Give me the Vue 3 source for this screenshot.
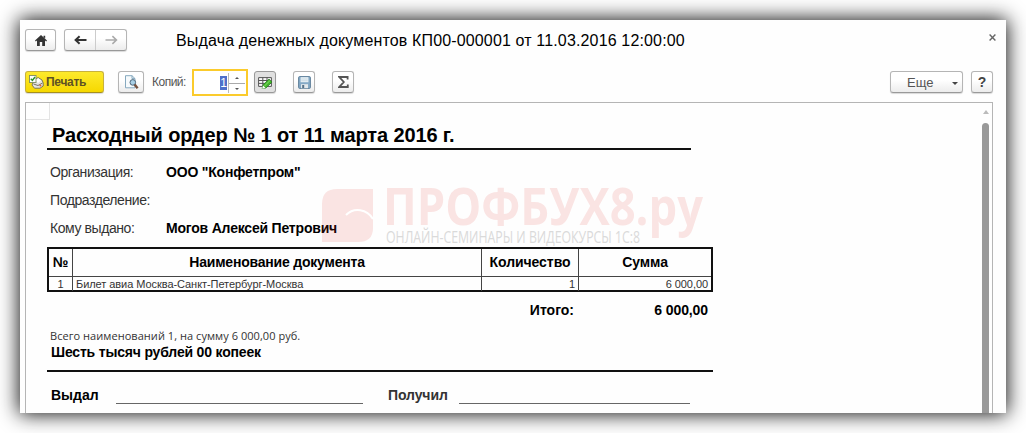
<template>
  <main>
    <div class="window">
      <header>
        <button class="btn home" aria-label="home">
          <svg width="12" height="11" viewBox="0 0 12 11">
            <path d="M6 0 L12 5.6 L11.2 6.6 L10 5.6 V11 H7.2 V7 H4.8 V11 H2 V5.6 L.8 6.6 L0 5.6 Z M8.5 .8 H10.2 V3.4 L8.5 2 Z" fill="#333" />
          </svg>
        </button>
        <div class="btn nav">
          <span><svg width="13" height="10" viewBox="0 0 13 10"><path d="M12.5 5 H2 M5.6 1.2 L1.6 5 L5.6 8.8" fill="none" stroke="#333" stroke-width="2" /></svg></span>
          <span><svg width="13" height="10" viewBox="0 0 13 10"><path d="M.5 5 H11 M7.4 1.2 L11.4 5 L7.4 8.8" fill="none" stroke="#aaa" stroke-width="1.6" /></svg></span>
        </div>
        <h1>Выдача денежных документов КП00-000001 от 11.03.2016 12:00:00</h1>
        <svg class="close" width="7" height="7" viewBox="0 0 7 7"><path d="M.6 .6 L6.4 6.4 M6.4 .6 L.6 6.4" stroke="#666" stroke-width="1.4" /></svg>
      </header>

      <div class="toolbar">
        <button class="btn print">
          <svg width="15" height="14" viewBox="0 0 15 14">
            <path d="M5 5.5 L9 2.5 L13 5 L14.2 8 V11 L11 13.2 H5.5 L3 10 Z" fill="#e4e4e0" stroke="#5f5d50" stroke-width=".8" />
            <path d="M6 5 L9.5 3.2 L12 5.5 L9 8 Z" fill="#fff" />
            <path d="M4.5 9 L9 10.5 L13.5 8" fill="none" stroke="#77756c" />
            <circle cx="11.4" cy="10.6" r="1" fill="#e0642c" />
            <rect x=".5" y=".5" width="6.5" height="7" fill="#fff" stroke="#7b8c62" stroke-width=".9" />
            <path d="M1.8 3.8 L3.4 5.5 L6 2" fill="none" stroke="#279127" stroke-width="1.4" />
          </svg>
          <span>Печать</span>
        </button>
        <button class="btn preview" aria-label="preview">
          <svg width="15" height="14" viewBox="0 0 15 14">
            <path d="M1.5 .7 H8 L11 3.6 V12.8 H1.5 Z" fill="#f6fafc" stroke="#86a9bf" />
            <path d="M8 .7 V3.6 H11" fill="none" stroke="#86a9bf" />
            <circle cx="8.8" cy="7.4" r="2.8" fill="#a8cfe5" stroke="#52677a" />
            <path d="M10.6 9.4 L13.6 13.2" stroke="#76513d" stroke-width="2.4" />
          </svg>
        </button>
        <label>Копий:</label>
        <div class="copies">
          <span class="value">1</span>
          <span class="spin"><i class="up"></i><i class="down"></i></span>
        </div>
        <button class="btn small pressed" aria-label="edit">
          <svg width="15" height="13" viewBox="0 0 15 13">
            <path d="M.6 1.6 H13.4 V10.4 H.6 Z M.6 4.5 H13.4 M.6 7.4 H13.4 M4.8 1.6 V10.4 M9 1.6 V10.4" fill="#fafafa" stroke="#555" />
            <path d="M5 9 L11 3 L14 6 L8 12 L4.2 12.7 Z" fill="#43b52c" stroke="#277b1c" stroke-width=".7" />
            <path d="M6.5 10 L12 4.5" stroke="#8de06c" />
            <path d="M5 9.4 L7.6 12 L4.2 12.7 Z" fill="#fff" />
          </svg>
        </button>
        <button class="btn small save" aria-label="save">
          <svg width="13" height="13" viewBox="0 0 13 13">
            <rect x=".6" y=".6" width="11.8" height="11.8" rx="1" fill="#84a9c6" stroke="#60809a" />
            <rect x="2.6" y="1.2" width="7.8" height="5" fill="#edf4f8" />
            <path d="M3.2 3 H9.8 M3.2 4.8 H9.8" stroke="#b6cbd9" stroke-width=".7" />
            <rect x="3" y="8.2" width="7" height="4" fill="#e3e8eb" />
            <rect x="4.2" y="9" width="2" height="3" fill="#557188" />
          </svg>
        </button>
        <button class="btn small sum" aria-label="sum">
          <svg width="11" height="12" viewBox="0 0 11 12"><path d="M9.6 3.4 V1 H1.3 L5.8 6 L1.3 11 H9.8 V8.6" fill="none" stroke="#555" stroke-width="1.8" /></svg>
        </button>
        <button class="btn more"><span>Еще</span><i></i></button>
        <button class="btn help">?</button>
      </div>

      <section class="sheet">
        <div class="corner"></div>
        <div class="scroll">
          <i></i>
          <b></b>
        </div>
        <div class="doc">
          <h2>Расходный ордер № 1 от 11 марта 2016 г.</h2>
          <dl>
            <div v-for="(field, index) in fields" :key="index">
              <dt>{{ field.label }}</dt>
              <dd>{{ field.value }}</dd>
            </div>
          </dl>
          <div class="table">
            <div class="tr head">
              <div>№</div>
              <div class="name">Наименование документа</div>
              <div>Количество</div>
              <div>Сумма</div>
            </div>
            <div class="tr" v-for="row in rows" :key="row.n">
              <div>{{ row.n }}</div>
              <div>{{ row.name }}</div>
              <div>{{ row.qty }}</div>
              <div>{{ row.sum }}</div>
            </div>
          </div>
          <div class="total"><span>Итого:</span><span class="t-sum">6 000,00</span></div>
          <p class="count">Всего наименований 1, на сумму 6 000,00 руб.</p>
          <p class="words">Шесть тысяч рублей 00 копеек</p>
          <div class="signs">
            <span class="gave">Выдал</span><i class="line-a"></i>
            <span class="got">Получил</span><i class="line-b"></i>
          </div>
        </div>
        <svg class="watermark" width="400" height="80" viewBox="0 0 400 80">
          <path d="M17 4 H53 V43 Q53 57 38 57 H2 V19 Q2 4 17 4 Z" fill="#dc2820" fill-opacity=".12" />
          <path d="M26 30 C34 22 47 24 53 34" fill="none" stroke="#fff" stroke-width="2" />
          <text class="brand" x="63" y="40" textLength="320" lengthAdjust="spacingAndGlyphs">ПРОФБУХ8.ру</text>
          <text class="slogan" x="66" y="57.5" textLength="254" lengthAdjust="spacingAndGlyphs">ОНЛАЙН-СЕМИНАРЫ И ВИДЕОКУРСЫ 1С:8</text>
        </svg>
      </section>
    </div>
  </main>
</template>

<script setup>
import { reactive } from 'vue';

const fields = reactive([
  { label: 'Организация:', value: 'ООО "Конфетпром"' },
  { label: 'Подразделение:', value: '' },
  { label: 'Кому выдано:', value: 'Могов Алексей Петрович' }
])

const rows = reactive([
  { n: 1, name: 'Билет авиа Москва-Санкт-Петербург-Москва', qty: 1, sum: '6 000,00' }
])
</script>

<style>
body {
  background: white;
  overflow: hidden;
}
</style>

<style scoped>
* {
  margin: 0;
  padding: 0;
  box-sizing: border-box;
}

main {
  font-family: 'Liberation Sans', Arial, sans-serif;
  width: 1026px;
  height: 433px;
  padding: 20px;
  color: #000;
  white-space: nowrap;
}

.window {
  width: 986px;
  height: 393px;
  background: #fefefe;
  box-shadow: 0 0 19px 1px rgba(0, 0, 0, 0.95);
  display: flex;
  flex-direction: column;
  padding: 9px 13px 0 5px;
}

header {
  display: flex;
  height: 42px;
  align-items: flex-start;
  margin-right: -3px;
}

.btn {
  font-family: 'Liberation Sans', Arial, sans-serif;
  height: 22px;
  border: 1px solid #b5b5b5;
  border-bottom-color: #999;
  border-radius: 3px;
  background: linear-gradient(#fff 40%, #ececec);
  box-shadow: 0 1px 1px rgba(0, 0, 0, 0.15);
  display: flex;
  align-items: center;
  justify-content: center;
  flex: none;
}

.home {
  width: 31px;
}

.nav {
  width: 63px;
  margin-left: 8px;
}

.nav span {
  flex: 1;
  height: 100%;
  display: flex;
  align-items: center;
  justify-content: center;
}

.nav span + span {
  border-left: 1px solid #ccc;
}

h1 {
  font-weight: normal;
  font-size: 16px;
  letter-spacing: 0.15px;
  line-height: 24px;
  margin-left: 49px;
  width: 509px;
}

.close {
  margin: 5px 0 0 auto;
}

.toolbar {
  display: flex;
  height: 31px;
}

.print {
  width: 79px;
  justify-content: flex-start;
  padding-left: 3px;
  gap: 2px;
  background: linear-gradient(#fdea2d, #f6d800);
  border-color: #c8b23c;
  border-bottom-color: #a68f1d;
  color: #5e5224;
  font-size: 12px;
  font-weight: bold;
  letter-spacing: -0.3px;
}

.preview {
  width: 26px;
  margin-left: 14px;
}

label {
  color: #555;
  font-size: 12px;
  letter-spacing: -0.5px;
  line-height: 23px;
  width: 40px;
  margin-left: 8px;
}

.copies {
  width: 56px;
  height: 27px;
  margin-top: -2px;
  border: 2px solid #fbcb2c;
  background: white;
  display: flex;
  justify-content: flex-end;
  align-items: center;
  padding-right: 1px;
}

.value {
  background: #4e6fc9;
  color: white;
  font-size: 12px;
  line-height: 14px;
  width: 7px;
  display: flex;
  justify-content: center;
  margin-right: 1px;
}

.spin {
  width: 17px;
  height: 20px;
  border-left: 1px solid #bbb;
  background: linear-gradient(#aaa, #aaa) 0 10px / 100% 1px no-repeat;
  display: flex;
  flex-direction: column;
  align-items: center;
  justify-content: space-between;
  padding: 4px 0 3px;
}

.up {
  border: 2px solid transparent;
  border-top: 0;
  border-bottom: 2px solid #555;
}

.down {
  border: 2px solid transparent;
  border-bottom: 0;
  border-top: 2px solid #555;
}

.small {
  width: 22px;
}

.pressed {
  margin-left: 6px;
  background: #e0e0e0;
  border-color: #999;
}

.save,
.sum {
  margin-left: 17px;
}

.more {
  width: 73px;
  margin-left: auto;
  justify-content: flex-start;
  padding-left: 16px;
  font-size: 13px;
  color: #555;
}

.more i {
  margin-left: 19px;
  margin-top: 3px;
  border: 3px solid transparent;
  border-top: 3px solid #444;
  border-bottom: 0;
}

.help {
  width: 22px;
  margin-left: 8px;
  font-size: 14px;
  font-weight: bold;
  color: #444;
}

.sheet {
  position: relative;
  flex: 1;
  min-height: 0;
  overflow: hidden;
  border: 1px solid #b5b5b5;
  border-bottom: 0;
}

.corner {
  position: absolute;
  width: 24px;
  height: 17px;
  border-right: 1px solid #e4e4e4;
  border-bottom: 1px solid #e4e4e4;
}

.scroll {
  position: absolute;
  right: 2px;
  top: 7px;
  bottom: 0;
  width: 9px;
  display: flex;
  flex-direction: column;
  align-items: center;
}

.scroll i {
  border: 3px solid transparent;
  border-top: 0;
  border-bottom: 4px solid #bbb;
}

.scroll b {
  width: 7px;
  flex: 1;
  margin-top: 9px;
  border-radius: 4px 4px 0 0;
  background: #999;
}

.doc {
  padding-left: 21px;
  width: 688px;
}

h2 {
  width: 644px;
  height: 47px;
  padding: 20px 0 0 5px;
  border-bottom: 2px solid #111;
  font-size: 20px;
  letter-spacing: -0.12px;
  line-height: 24px;
}

dl {
  padding-top: 8px;
  height: 97px;
  font-size: 14px;
}

dl div {
  display: flex;
  height: 28px;
  line-height: 28px;
  padding-left: 3px;
}

dt {
  width: 116px;
  color: #333;
  letter-spacing: -0.42px;
}

dd {
  font-weight: bold;
  letter-spacing: -0.2px;
}

.table {
  width: 666px;
  height: 45px;
  border: 2px solid #111;
}

.tr {
  display: grid;
  grid-template-columns: 23px 409px 97px 1fr;
  height: 14px;
  font-size: 11px;
  letter-spacing: -0.06px;
  line-height: 14px;
  color: #333;
}

.tr div + div {
  border-left: 1px solid #444;
  padding: 0 3px 0 3px;
}

.tr div:first-child {
  text-align: center;
}

.tr div:nth-child(n + 3) {
  text-align: right;
}

.tr.head {
  height: 28px;
  line-height: 26px;
  border-bottom: 1px solid #444;
  font-size: 14px;
  font-weight: bold;
  color: #000;
}

.tr.head div {
  text-align: center;
  padding: 0;
}

.tr.head .name {
  letter-spacing: -0.2px;
}

.total {
  display: flex;
  justify-content: flex-end;
  height: 36px;
  line-height: 36px;
  font-size: 14px;
  font-weight: bold;
  padding-right: 6px;
}

.t-sum {
  width: 134px;
  text-align: right;
  letter-spacing: -0.1px;
}

.count {
  font-family: 'Open Sans', sans-serif;
  font-size: 11px;
  letter-spacing: 0.05px;
  line-height: 15px;
  padding-left: 3px;
  color: #333;
}

.words {
  width: 666px;
  height: 29px;
  padding: 1px 0 0 4px;
  font-size: 14px;
  font-weight: bold;
  letter-spacing: -0.18px;
  line-height: 17px;
  border-bottom: 2px solid #111;
}

.signs {
  display: flex;
  height: 33px;
  padding: 15px 0 0 4px;
  font-size: 14px;
  font-weight: bold;
  line-height: 17px;
}

.signs i {
  height: 17px;
  border-bottom: 1px solid #666;
}

.gave {
  width: 65px;
}

.line-a {
  width: 247px;
}

.got {
  width: 71px;
  margin-left: 25px;
  color: #333;
  letter-spacing: -0.1px;
}

.line-b {
  width: 231px;
}

.watermark {
  position: absolute;
  left: 294px;
  top: 82px;
}

.brand {
  font-family: 'Open Sans', sans-serif;
  font-size: 52px;
  font-weight: bold;
  fill: #dc2820;
  fill-opacity: 0.12;
}

.slogan {
  font-family: 'Open Sans', sans-serif;
  font-size: 16px;
  fill: #dadada;
}
</style>
